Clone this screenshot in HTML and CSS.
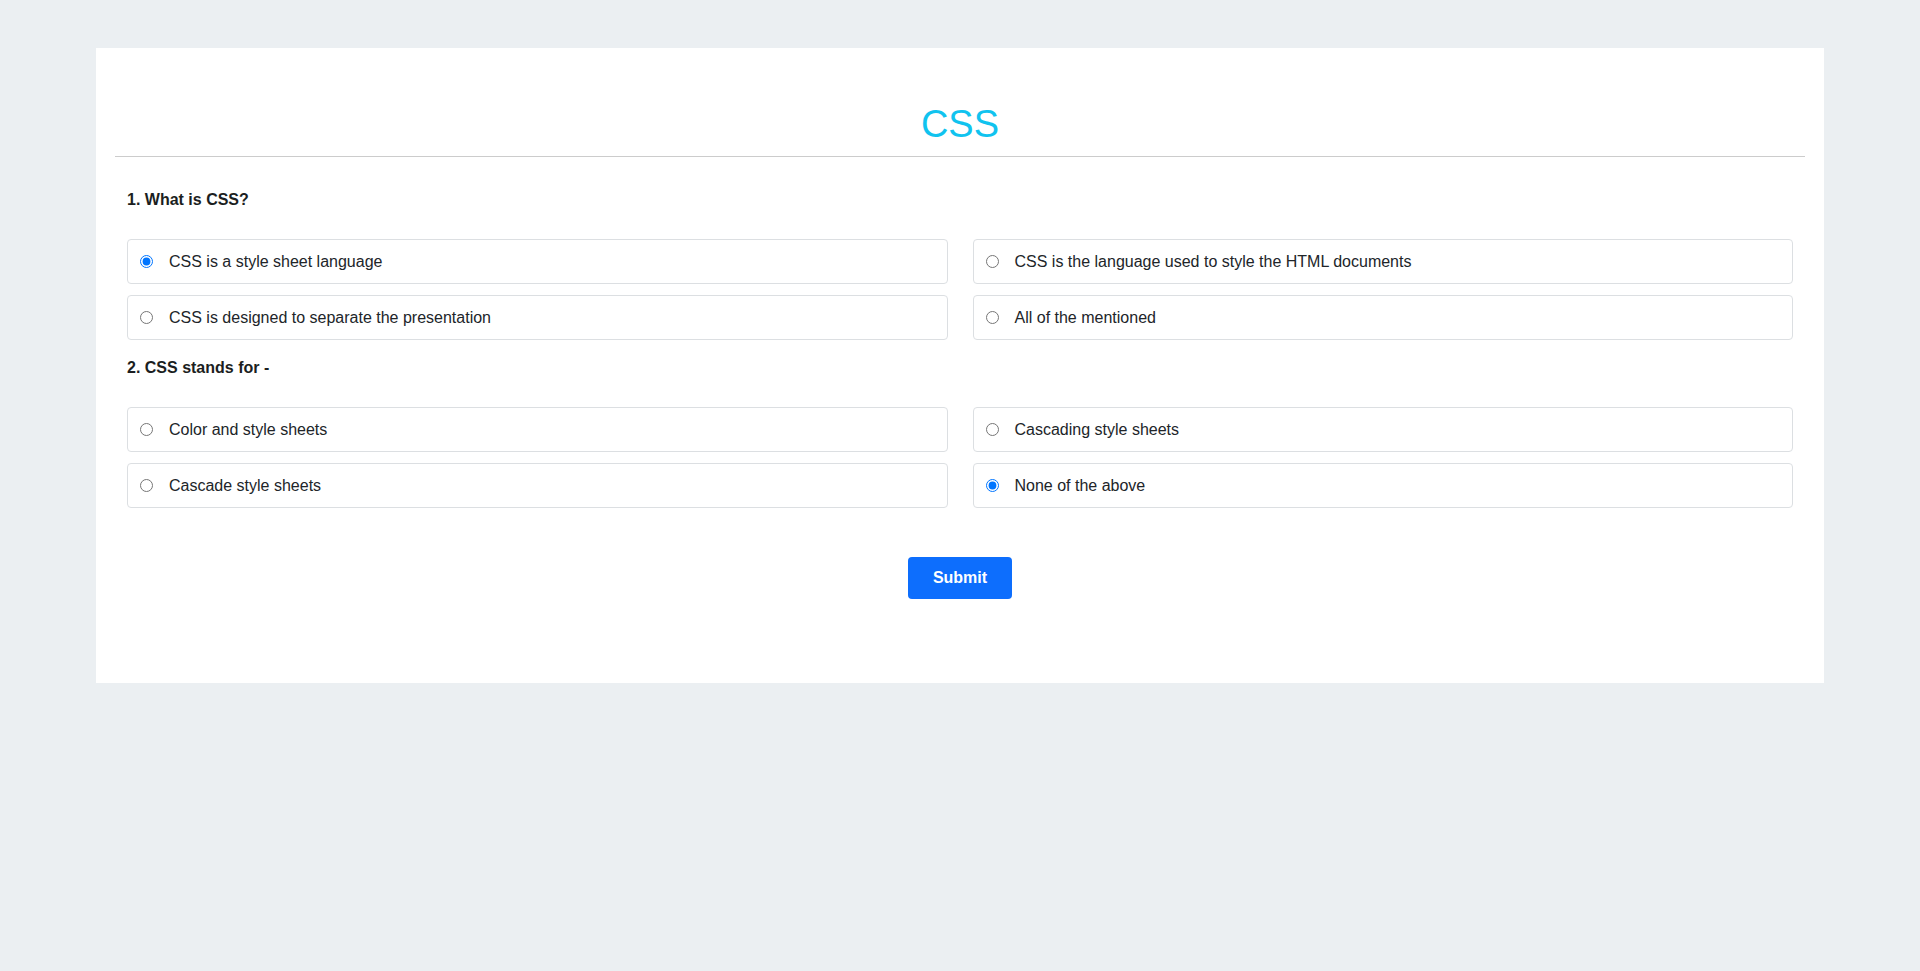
FILE: index.html
```html
<!DOCTYPE html>
<html lang="en">
<head>
<meta charset="utf-8">
<title>CSS Quiz</title>
<link rel="stylesheet" href="styles.css">
</head>
<body>
<div class="card">
  <h1 class="title">CSS</h1>
  <hr class="divider">
  <form class="quiz">
    <div class="question">
      <p class="q-title">1. What is CSS?</p>
      <div class="options">
        <label class="option"><input type="radio" name="q1" checked><span>CSS is a style sheet language</span></label>
        <label class="option"><input type="radio" name="q1"><span>CSS is the language used to style the HTML documents</span></label>
        <label class="option"><input type="radio" name="q1"><span>CSS is designed to separate the presentation</span></label>
        <label class="option"><input type="radio" name="q1"><span>All of the mentioned</span></label>
      </div>
    </div>
    <div class="question q-second">
      <p class="q-title">2. CSS stands for -</p>
      <div class="options">
        <label class="option"><input type="radio" name="q2"><span>Color and style sheets</span></label>
        <label class="option"><input type="radio" name="q2"><span>Cascading style sheets</span></label>
        <label class="option"><input type="radio" name="q2"><span>Cascade style sheets</span></label>
        <label class="option"><input type="radio" name="q2" checked><span>None of the above</span></label>
      </div>
    </div>
    <div class="actions">
      <button type="button" class="submit">Submit</button>
    </div>
  </form>
</div>
</body>
</html>
```

FILE: styles.css
```css
html, body {
  margin: 0;
  padding: 0;
}
body {
  background: #ebeff2;
  font-family: "Liberation Sans", Arial, sans-serif;
  color: #212529;
}
.card {
  width: 1728px;
  box-sizing: border-box;
  margin: 48px auto 0;
  background: #ffffff;
  padding: 54px 19px 84px;
}
.title {
  margin: 0;
  text-align: center;
  font-size: 38px;
  line-height: 44px;
  font-weight: normal;
  color: #10c3ef;
}
.divider {
  margin: 10px 0 0;
  border: 0;
  border-top: 1px solid #cccccc;
  height: 0;
}
.quiz {
  padding: 0 12px;
}
.question {
  padding-top: 33px;
}
.q-second {
  padding-top: 18px;
}
.q-title {
  margin: 0 0 29px;
  font-size: 16px;
  line-height: 20px;
  font-weight: bold;
  color: #1b1e21;
}
.options {
  display: grid;
  grid-template-columns: 1fr 1fr;
  column-gap: 25px;
  row-gap: 11px;
}
.option {
  display: flex;
  align-items: center;
  gap: 16px;
  height: 45px;
  box-sizing: border-box;
  padding: 0 12px;
  border: 1px solid #dcdfe2;
  border-radius: 4px;
  font-size: 16px;
  line-height: 20px;
  color: #212529;
}
.option input {
  margin: 0;
  width: 13px;
  height: 13px;
}
.actions {
  display: flex;
  justify-content: center;
  padding-top: 49px;
}
.submit {
  width: 104px;
  height: 42px;
  border: 0;
  border-radius: 4px;
  background: #0d6efd;
  color: #ffffff;
  font-family: "Liberation Sans", Arial, sans-serif;
  font-size: 16px;
  font-weight: bold;
  cursor: pointer;
}
```
